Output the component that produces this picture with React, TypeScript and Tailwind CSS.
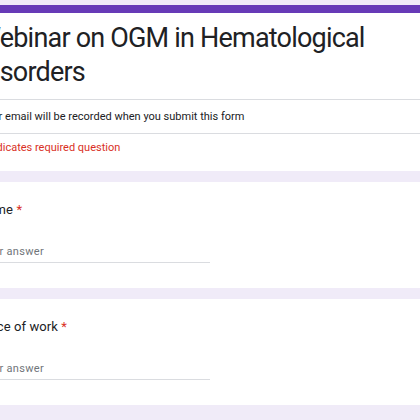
export default function App() {
  return (
    <div className="h-[420px] w-[420px] overflow-hidden bg-[#f0ebf8] font-['Roboto',sans-serif] text-[#202124]">
      <div className="ml-[-44px] w-[520px] pt-[5px]">
        <div className="overflow-hidden rounded-lg bg-white">
          <div className="h-[8px] bg-[#673ab7]" />
          <div className="px-6 pb-[10px] pt-[8px]">
            <h1 className="ml-[-3px] text-[27px] leading-[34px] tracking-[-0.8px] text-[#202124]">
              Webinar on OGM in Hematological
              <br />
              Disorders
            </h1>
          </div>
          <div className="border-t border-[#dadce0] px-6 pb-[8px] pt-[9px] text-[11px] leading-[16px] text-[#202124]">
            Your email will be recorded when you submit this form
          </div>
          <div className="border-t border-[#dadce0] px-6 pb-[15px] pt-[6px] text-[11px] leading-[16px] text-[#d93025]">
            * Indicates required question
          </div>
        </div>

        <QuestionCard label="Name" />
        <QuestionCard label="Place of work" />
      </div>
    </div>
  );
}

function QuestionCard({ label }: { label: string }) {
  return (
    <div className="mt-[11px] rounded-lg bg-white px-6 pb-[25px] pt-[18px]">
      <div className="ml-[-2px] text-[13px] leading-[20px] tracking-[0.1px]">
        {label} <span className="text-[#d93025]">*</span>
      </div>
      <div className="mt-[24px] w-[230px] border-b border-[#dadce0] pb-[2px] text-[11px] leading-[16px] tracking-[0.3px] text-[#70757a]">
        Your answer
      </div>
    </div>
  );
}
